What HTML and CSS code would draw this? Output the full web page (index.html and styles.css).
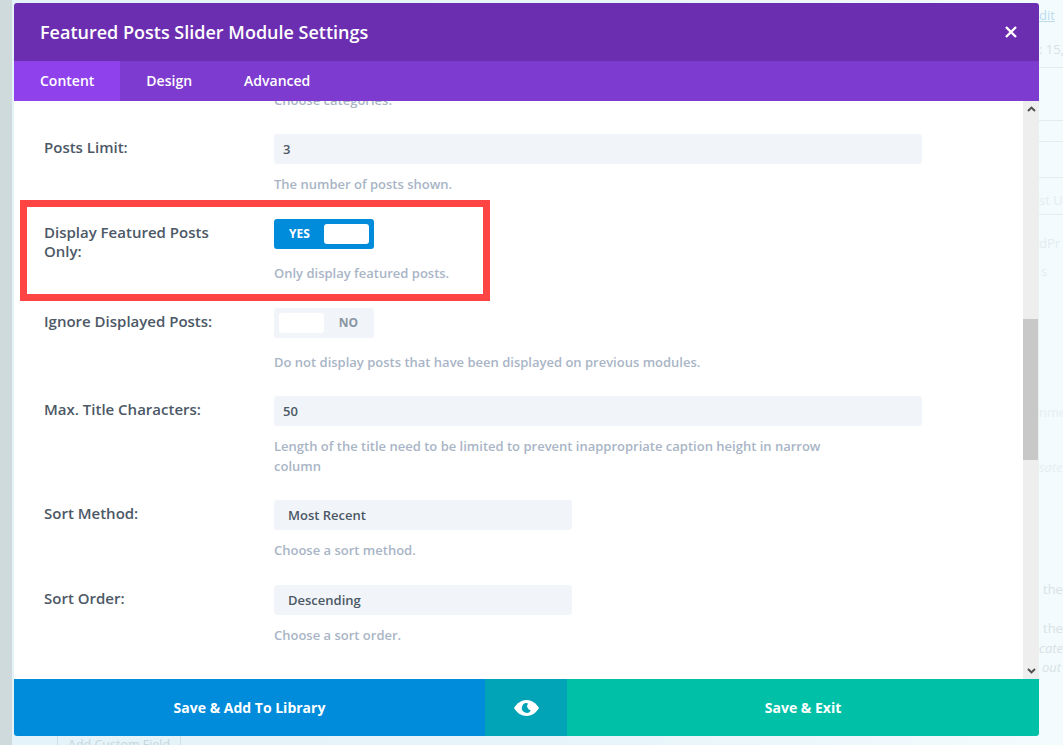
FILE: index.html
```html
<!DOCTYPE html>
<html lang="en">
<head>
    <meta charset="UTF-8">
    <meta name="viewport" content="width=device-width, initial-scale=1.0">
    <title>Featured Posts Slider Module Settings</title>
    <link rel="stylesheet" href="styles.css">
</head>
<body>
    <div class="backdrop">
        <div class="line line-1"></div>
        <div class="line line-2"></div>
        <div class="line line-3"></div>
        <div class="line line-4"></div>
        <div class="line line-5"></div>
        <span class="ghost ghost-edit">dit</span>
        <span class="ghost ghost-date">: 15,</span>
        <span class="ghost ghost-us">st U</span>
        <span class="ghost ghost-wp">dPr</span>
        <span class="ghost ghost-s">s</span>
        <span class="ghost ghost-nme">nme</span>
        <span class="ghost ghost-sat">sate</span>
        <span class="ghost ghost-the1">the</span>
        <span class="ghost ghost-the2">the</span>
        <span class="ghost ghost-cat">cate</span>
        <span class="ghost ghost-out">out</span>
        <span class="ghost ghost-add">Add Custom Field</span>
    </div>

    <div class="modal">
        <div class="modal-header">
            <h1>Featured Posts Slider Module Settings</h1>
            <svg class="close-icon" width="12" height="12" viewBox="0 0 12 12">
                <path d="M1 1L11 11M11 1L1 11" stroke="#fff" stroke-width="2.4" fill="none"/>
            </svg>
        </div>
        <div class="tabs">
            <div class="tab active">Content</div>
            <div class="tab">Design</div>
            <div class="tab">Advanced</div>
        </div>

        <div class="modal-body">
            <div class="settings">
                <p class="desc cut-off">Choose categories.</p>

                <div class="row">
                    <label>Posts Limit:</label>
                    <div class="field">
                        <div class="input">3</div>
                        <p class="desc">The number of posts shown.</p>
                    </div>
                </div>

                <div class="row row-toggle">
                    <label>Display Featured Posts Only:</label>
                    <div class="field">
                        <div class="toggle on"><span class="toggle-text">YES</span><span class="knob"></span></div>
                        <p class="desc">Only display featured posts.</p>
                    </div>
                </div>

                <div class="row row-toggle">
                    <label>Ignore Displayed Posts:</label>
                    <div class="field">
                        <div class="toggle"><span class="knob"></span><span class="toggle-text">NO</span></div>
                        <p class="desc">Do not display posts that have been displayed on previous modules.</p>
                    </div>
                </div>

                <div class="row">
                    <label>Max. Title Characters:</label>
                    <div class="field">
                        <div class="input">50</div>
                        <p class="desc desc-wrap">Length of the title need to be limited to prevent inappropriate caption height in narrow column</p>
                    </div>
                </div>

                <div class="row">
                    <label>Sort Method:</label>
                    <div class="field">
                        <div class="input select">Most Recent</div>
                        <p class="desc">Choose a sort method.</p>
                    </div>
                </div>

                <div class="row">
                    <label>Sort Order:</label>
                    <div class="field">
                        <div class="input select">Descending</div>
                        <p class="desc">Choose a sort order.</p>
                    </div>
                </div>
            </div>

            <div class="scrollbar">
                <svg class="arrow" width="9" height="6" viewBox="0 0 9 6">
                    <path d="M1 5L4.5 1.6L8 5" stroke="#505050" stroke-width="2" fill="none"/>
                </svg>
                <div class="track"><div class="thumb"></div></div>
                <svg class="arrow" width="9" height="6" viewBox="0 0 9 6">
                    <path d="M1 1L4.5 4.4L8 1" stroke="#505050" stroke-width="2" fill="none"/>
                </svg>
            </div>

            <div class="highlight"></div>
        </div>

        <div class="modal-footer">
            <div class="btn btn-library">Save &amp; Add To Library</div>
            <div class="btn btn-preview">
                <svg width="25" height="16" viewBox="0 0 25 16">
                    <path d="M0 8C3 3 7.500 0 12.500 0S22 3 25 8C22 13 17.500 16 12.500 16S3 13 0 8Z" fill="#fff"/>
                    <path d="M14 3.400A4.800 4.800 0 1 0 16.800 10.400A4.500 4.500 0 0 1 14 3.400Z" fill="#00a4b6"/>
                </svg>
            </div>
            <div class="btn btn-save">Save &amp; Exit</div>
        </div>
    </div>
</body>
</html>
```

FILE: styles.css
```css
* {
    box-sizing: border-box;
}
html, body {
    margin: 0;
    height: 100%;
}
body {
    font-family: "Open Sans", Arial, sans-serif;
    font-weight: 600;
    overflow: hidden;
    background: linear-gradient(90deg, #e4f3f9 0%, #e8f5fa 60%, #f3fbfd 100%);
}
.backdrop {
    position: absolute;
    top: 0;
    left: 0;
    width: 1063px;
    height: 745px;
    overflow: hidden;
    border-left: 12px solid #cfdadd;
}
.line {
    position: absolute;
    left: 1027px;
    width: 24px;
    height: 1px;
    background: #e2edf1;
}
.line-1 { top: 67px; }
.line-2 { top: 120px; }
.line-3 { top: 141px; }
.line-4 { top: 177px; }
.line-5 { top: 214px; }
.ghost {
    position: absolute;
    font-size: 13px;
    font-weight: 400;
    color: #d8e2e6;
    white-space: nowrap;
}
.ghost-edit { left: 1027px; top: 6px; color: #bcdcee; text-decoration: underline; }
.ghost-date { left: 1027px; top: 40px; }
.ghost-us { left: 1027px; top: 191px; color: #e3edf1; }
.ghost-wp { left: 1027px; top: 234px; color: #e3edf1; }
.ghost-s { left: 1029px; top: 262px; color: #e3edf1; }
.ghost-nme { left: 1027px; top: 403px; color: #e6eff3; }
.ghost-sat { left: 1027px; top: 458px; color: #e6eff3; font-style: italic; }
.ghost-the1 { left: 1031px; top: 580px; }
.ghost-the2 { left: 1031px; top: 619px; }
.ghost-cat { left: 1027px; top: 639px; font-style: italic; }
.ghost-out { left: 1030px; top: 658px; font-style: italic; }
.ghost-add {
    left: 45px;
    top: 736px;
    height: 20px;
    padding: 0 10px;
    font-size: 12.500px;
    color: #c5d6dc;
    border-left: 1px solid #cfe0e6;
    border-right: 1px solid #cfe0e6;
}

.modal {
    position: absolute;
    top: 3px;
    left: 14px;
    width: 1025px;
    height: 733px;
    display: flex;
    flex-direction: column;
    background: #fff;
    border-radius: 3px;
    overflow: hidden;
}
.modal-header {
    flex: 0 0 58px;
    display: flex;
    align-items: center;
    justify-content: space-between;
    padding: 0 22px 0 26px;
    background: #6c2eb0;
}
.modal-header h1 {
    margin: 0;
    font-size: 18px;
    font-weight: 600;
    color: #fff;
}
.tabs {
    flex: 0 0 40px;
    display: flex;
    background: #7e3bd0;
}
.tab {
    padding: 0 26px;
    font-size: 14px;
    line-height: 40px;
    color: #fff;
}
.tab.active {
    background: #8f42ec;
}

.modal-body {
    position: relative;
    flex: 1;
    display: flex;
    overflow: hidden;
}
.settings {
    flex: 1;
    padding: 0 30px;
}
.row {
    display: flex;
    padding-bottom: 25px;
}
.row-toggle {
    padding-bottom: 24.500px;
}
.row label {
    flex: 0 0 230px;
    padding-right: 50px;
    padding-top: 4px;
    font-size: 15px;
    line-height: 19px;
    color: #4c5866;
}
.field {
    flex: 1;
    padding-right: 71px;
}
.input {
    height: 30px;
    padding: 0 9px;
    font-size: 13px;
    line-height: 30px;
    color: #4c5866;
    background: #f1f5f9;
    border-radius: 3px;
}
.select {
    width: 298px;
    padding: 0 14px;
}
.desc {
    margin: 10px 0 0;
    font-size: 13px;
    line-height: 20px;
    color: #a9b5c6;
}
.toggle + .desc {
    margin-top: 14px;
}
.desc-wrap {
    max-width: 560px;
    margin-bottom: -1px;
}
.cut-off {
    margin: -11px 0 24px 230px;
}
.toggle {
    display: flex;
    align-items: center;
    width: 100px;
    height: 30px;
    padding: 0 5px;
    font-size: 12px;
    font-weight: 700;
    color: #8a95a3;
    background: #f1f5f9;
    border-radius: 3px;
}
.toggle-text {
    flex: 1;
    padding-left: 4px;
    text-align: center;
}
.toggle.on {
    color: #fff;
    background: #008bdb;
}
.toggle.on .toggle-text {
    padding: 0 4px 1px 0;
}
.knob {
    flex: 0 0 45px;
    height: 20px;
    background: #fff;
    border-radius: 3px;
}
.scrollbar {
    flex: 0 0 16px;
    display: flex;
    flex-direction: column;
    align-items: center;
    background: #eeeeee;
}
.arrow {
    flex: 0 0 6px;
    margin: 5px 0;
}
.track {
    flex: 1;
    align-self: stretch;
    padding-top: 202px;
}
.thumb {
    width: 15px;
    height: 141px;
    background: #c8c8c8;
}
.highlight {
    position: absolute;
    top: 99px;
    left: 6px;
    width: 470px;
    height: 101px;
    border: 7px solid #ff4444;
}

.modal-footer {
    flex: 0 0 57px;
    display: flex;
}
.btn {
    display: flex;
    align-items: center;
    justify-content: center;
    font-size: 14px;
    font-weight: 700;
    color: #fff;
}
.btn-library {
    flex: 0 0 471px;
    background: #008bdb;
}
.btn-preview {
    flex: 0 0 82px;
    background: #00a4b6;
}
.btn-save {
    flex: 1;
    background: #00c1a8;
}
```
